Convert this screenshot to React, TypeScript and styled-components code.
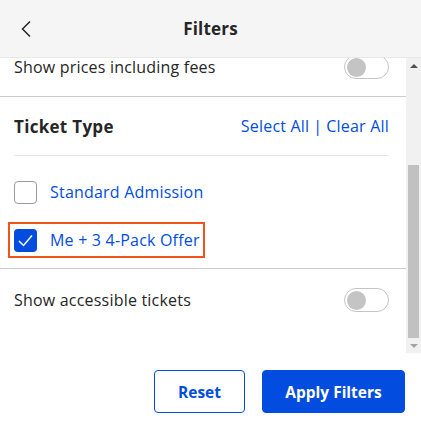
import { useLayoutEffect, useRef, useState } from "react";
import styled, { createGlobalStyle } from "styled-components";

const BLUE = "#024ddf";

const GlobalStyle = createGlobalStyle`
  html, body {
    margin: 0;
    padding: 0;
    background: #fff;
  }
  body {
    font-family: "Open Sans", "Noto Sans", "Liberation Sans", sans-serif;
    color: #262626;
  }
  * { box-sizing: border-box; }
`;

const Page = styled.div`
  width: 421px;
  height: 439px;
  display: flex;
  flex-direction: column;
  background: #fff;
`;

const Header = styled.header`
  height: 58px;
  flex: none;
  display: grid;
  grid-template-columns: 58px 1fr 58px;
  align-items: center;
  background: #f5f5f5;
  border-bottom: 1px solid #e9e9e9;
`;

const BackButton = styled.button`
  border: none;
  background: none;
  padding: 0 0 0 19px;
  height: 100%;
  display: flex;
  align-items: center;
  color: #262626;
  cursor: pointer;
`;

const Title = styled.h1`
  margin: 0;
  text-align: center;
  font-size: 17px;
  font-weight: 700;
  letter-spacing: 0.2px;
`;

const ScrollArea = styled.div`
  flex: 1;
  min-height: 0;
  display: flex;
`;

const Scroller = styled.div`
  flex: 1;
  overflow-y: scroll;
  scrollbar-width: none;
  &::-webkit-scrollbar {
    display: none;
  }
`;

const Bar = styled.div`
  width: 15px;
  flex: none;
  display: flex;
  flex-direction: column;
  background: #f1f1f1;
`;

const Arrow = styled.div<{ $down?: boolean; $disabled?: boolean }>`
  height: 15px;
  flex: none;
  display: flex;
  align-items: center;
  justify-content: center;
  &::before {
    content: "";
    border-left: 4px solid transparent;
    border-right: 4px solid transparent;
    ${(p) => (p.$down ? "border-top" : "border-bottom")}: 4px solid
      ${(p) => (p.$disabled ? "#a3a3a3" : "#505050")};
  }
`;

const BarTrack = styled.div`
  flex: 1;
  display: flex;
  flex-direction: column;
  padding: 0 2px;
`;

const Thumb = styled.div`
  background: #c1c1c1;
  flex: none;
`;

const Row = styled.div<{ $h: number; $noBorder?: boolean }>`
  height: ${(p) => p.$h}px;
  display: flex;
  align-items: center;
  justify-content: space-between;
  padding: 0 17px 0 14px;
  font-size: 16px;
  letter-spacing: 0.2px;
  border-bottom: ${(p) => (p.$noBorder ? "none" : "1px solid #cccccc")};
`;

const TopRow = styled(Row)`
  align-items: flex-start;
  padding-top: 19px;
  line-height: 24px;
`;

const Section = styled.section`
  border-bottom: 1px solid #cccccc;
  padding-bottom: 12px;
`;

const SectionHead = styled.div`
  height: 59px;
  margin: 0 17px 0 14px;
  display: flex;
  align-items: center;
  justify-content: space-between;
  border-bottom: 1px solid #e6e6e6;
`;

const SectionTitle = styled.h2`
  margin: 0;
  font-size: 17px;
  font-weight: 700;
  letter-spacing: 0.3px;
`;

const Links = styled.div`
  font-size: 16px;
  letter-spacing: 0.2px;
  color: ${BLUE};
  display: flex;
  gap: 4px;
`;

const LinkButton = styled.button`
  border: none;
  background: none;
  padding: 0;
  font: inherit;
  letter-spacing: inherit;
  color: inherit;
  cursor: pointer;
`;

const OptionList = styled.div`
  display: flex;
  flex-direction: column;
  align-items: flex-start;
  gap: 16px;
  padding: 20px 0 0 10px;
`;

const OptionLabel = styled.label<{ $focused?: boolean }>`
  height: 32px;
  display: inline-flex;
  align-items: center;
  gap: 13px;
  padding: 0 3px 0 4px;
  font-size: 16px;
  letter-spacing: 0.2px;
  color: ${BLUE};
  cursor: pointer;
  outline: ${(p) => (p.$focused ? "2px solid #f2531a" : "none")};
`;

const Box = styled.span<{ $checked: boolean }>`
  width: 23px;
  height: 23px;
  flex: none;
  border-radius: 4px;
  display: flex;
  align-items: center;
  justify-content: center;
  background: ${(p) => (p.$checked ? BLUE : "#fff")};
  border: ${(p) => (p.$checked ? "none" : "1.5px solid #9b9b9b")};
`;

const HiddenInput = styled.input`
  display: none;
`;

const Track = styled.button<{ $on: boolean }>`
  width: 45px;
  height: 24px;
  padding: 0 2px;
  border-radius: 12px;
  border: 1px solid #c4c4c4;
  background: ${(p) => (p.$on ? BLUE : "#fff")};
  display: flex;
  align-items: center;
  justify-content: ${(p) => (p.$on ? "flex-end" : "flex-start")};
  cursor: pointer;
`;

const Knob = styled.span<{ $on: boolean }>`
  width: 19px;
  height: 19px;
  border-radius: 50%;
  background: ${(p) => (p.$on ? "#fff" : "#c4c4c4")};
`;

const Footer = styled.footer`
  height: 86px;
  flex: none;
  display: flex;
  justify-content: flex-end;
  align-items: flex-start;
  gap: 17px;
  padding: 17px 16px 0 0;
`;

const Button = styled.button<{ $primary?: boolean; $w: number }>`
  width: ${(p) => p.$w}px;
  height: 43px;
  border-radius: 4px;
  font-family: inherit;
  font-size: 15.5px;
  font-weight: 700;
  cursor: pointer;
  border: 1px solid ${BLUE};
  background: ${(p) => (p.$primary ? BLUE : "#fff")};
  color: ${(p) => (p.$primary ? "#fff" : BLUE)};
`;

const Toggle = ({ on, onClick }: { on: boolean; onClick: () => void }) => (
  <Track $on={on} onClick={onClick} aria-pressed={on}>
    <Knob $on={on} />
  </Track>
);

const Checkbox = ({
  label,
  checked,
  focused,
  onChange,
}: {
  label: string;
  checked: boolean;
  focused?: boolean;
  onChange: () => void;
}) => (
  <OptionLabel $focused={focused}>
    <HiddenInput type="checkbox" checked={checked} onChange={onChange} />
    <Box $checked={checked}>
      {checked && (
        <svg width="17" height="15" viewBox="0 0 17 15">
          <polyline points="2,8 6.5,12.5 15,2.5" fill="none" stroke="#fff" strokeWidth="1.5" />
        </svg>
      )}
    </Box>
    {label}
  </OptionLabel>
);

export default function App() {
  const scroller = useRef<HTMLDivElement>(null);
  const [fees, setFees] = useState(false);
  const [accessible, setAccessible] = useState(false);
  const [types, setTypes] = useState({ standard: false, pack: true });
  const [bar, setBar] = useState({ top: 0, size: 1, atEnd: false });

  const measure = () => {
    const el = scroller.current;
    if (!el) return;
    const max = el.scrollHeight - el.clientHeight;
    setBar({
      top: max > 0 ? el.scrollTop / max : 0,
      size: el.clientHeight / el.scrollHeight,
      atEnd: el.scrollTop >= max - 1,
    });
  };

  useLayoutEffect(() => {
    if (scroller.current) scroller.current.scrollTop = 10000;
    measure();
  }, []);

  // track = scroll viewport minus the two arrow buttons
  const trackLen = 439 - 58 - 86 - 30;
  const thumbLen = Math.round(trackLen * bar.size);
  const thumbTop = Math.round((trackLen - thumbLen) * bar.top);

  return (
    <>
      <GlobalStyle />
      <Page>
        <Header>
          <BackButton aria-label="Back">
            <svg width="14" height="18" viewBox="0 0 14 18">
              <polyline points="11,1.5 3.5,9 11,16.5" fill="none" stroke="#262626" strokeWidth="1.5" />
            </svg>
          </BackButton>
          <Title>Filters</Title>
          <span />
        </Header>

        <ScrollArea>
          <Scroller ref={scroller} onScroll={measure}>
            <Row $h={79}>
              <span>Sort by: Lowest Price</span>
            </Row>
            <Row $h={58}>
              <span>Quantity: 2 Tickets</span>
            </Row>
            <Row $h={59}>
              <span>Show prices including fees</span>
              <Toggle on={fees} onClick={() => setFees(!fees)} />
            </Row>

            <Section>
              <SectionHead>
                <SectionTitle>Ticket Type</SectionTitle>
                <Links>
                  <LinkButton onClick={() => setTypes({ standard: true, pack: true })}>Select All</LinkButton>
                  <span>|</span>
                  <LinkButton onClick={() => setTypes({ standard: false, pack: false })}>Clear All</LinkButton>
                </Links>
              </SectionHead>
              <OptionList>
                <Checkbox
                  label="Standard Admission"
                  checked={types.standard}
                  onChange={() => setTypes({ ...types, standard: !types.standard })}
                />
                <Checkbox
                  label="Me + 3 4-Pack Offer"
                  checked={types.pack}
                  focused
                  onChange={() => setTypes({ ...types, pack: !types.pack })}
                />
              </OptionList>
            </Section>

            <TopRow $h={84} $noBorder>
              <span>Show accessible tickets</span>
              <Toggle on={accessible} onClick={() => setAccessible(!accessible)} />
            </TopRow>
          </Scroller>

          <Bar>
            <Arrow />
            <BarTrack>
              <Thumb style={{ marginTop: thumbTop, height: thumbLen }} />
            </BarTrack>
            <Arrow $down $disabled={bar.atEnd} />
          </Bar>
        </ScrollArea>

        <Footer>
          <Button $w={91}>Reset</Button>
          <Button $w={143} $primary>
            Apply Filters
          </Button>
        </Footer>
      </Page>
    </>
  );
}
